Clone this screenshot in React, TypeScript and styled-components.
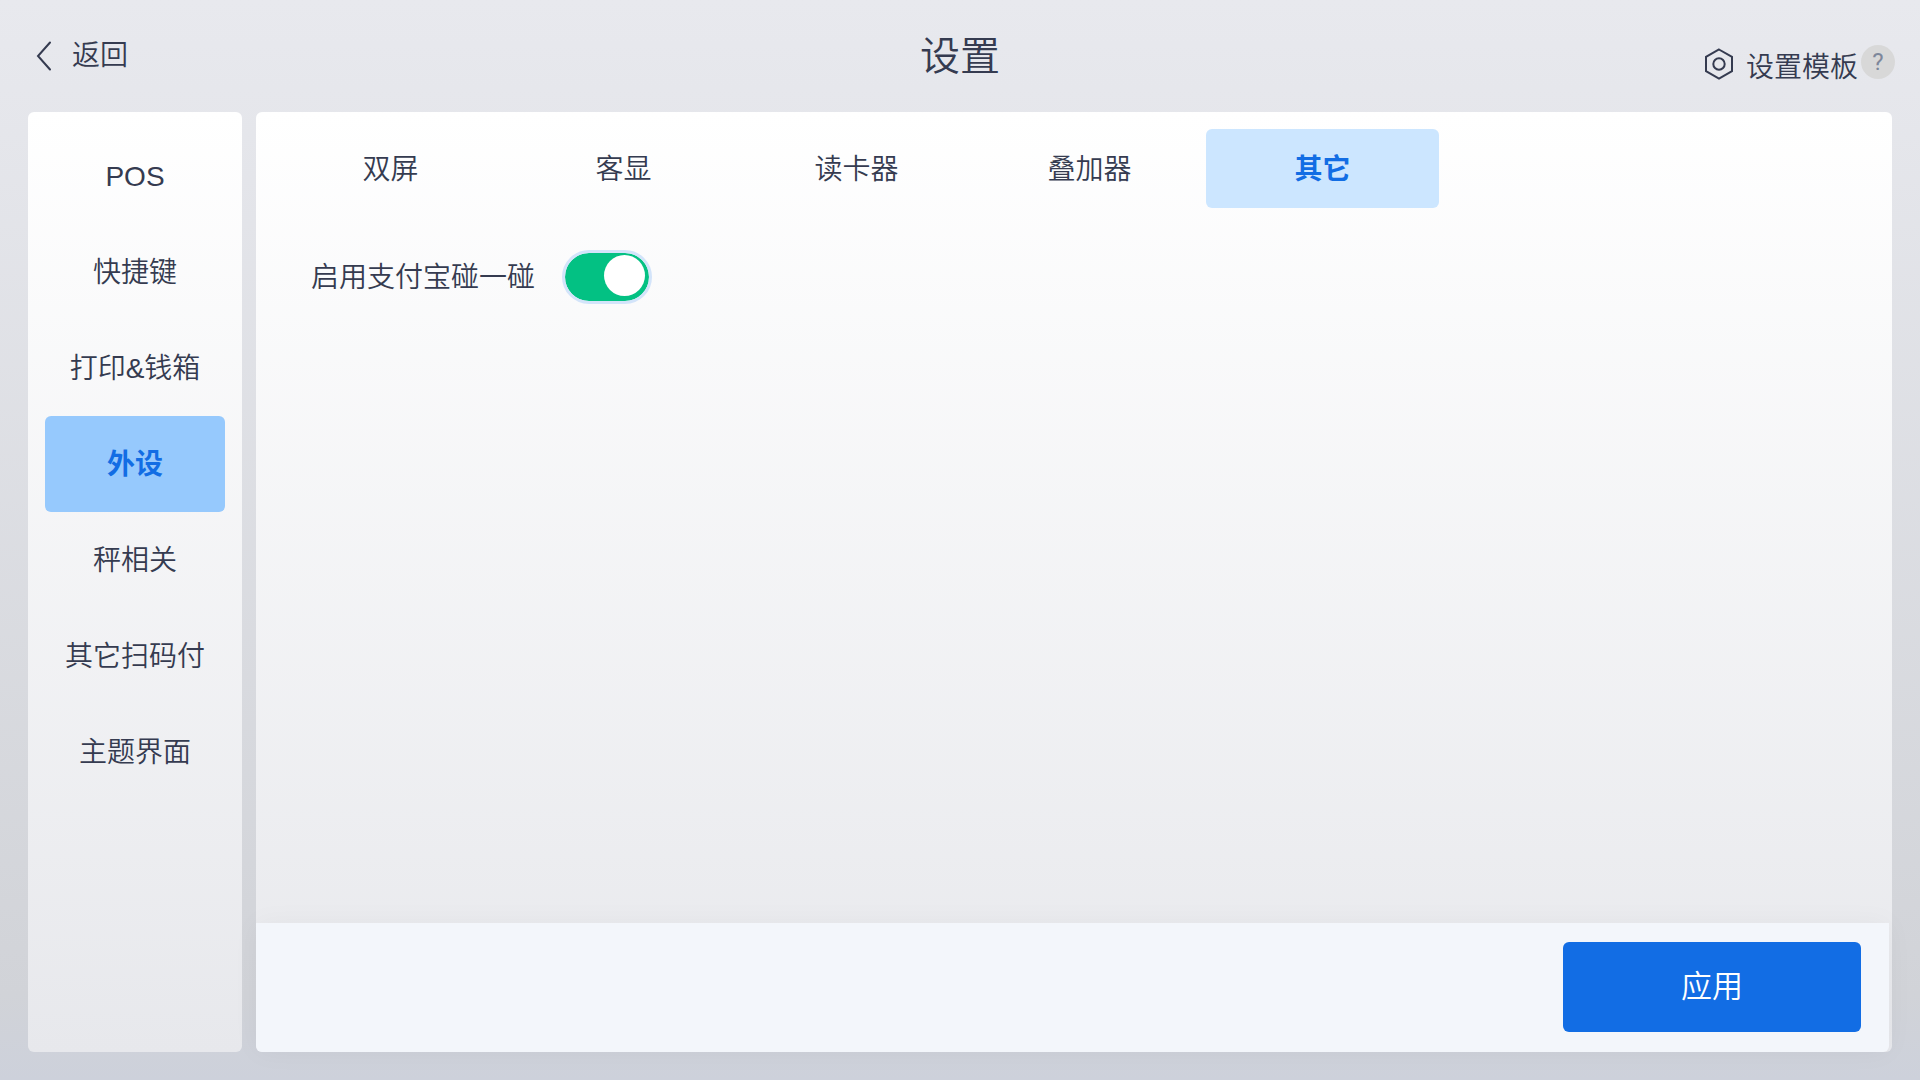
import React, { useState } from "react";
import styled, { createGlobalStyle } from "styled-components";

const GlobalStyle = createGlobalStyle`
  *, *::before, *::after { box-sizing: border-box; }
  body {
    margin: 0;
    font-family: "Liberation Sans", "Noto Sans CJK SC", sans-serif;
    font-size: 28px;
    font-weight: 350;
    line-height: 40px;
    color: #353b50;
  }
  button, input { font: inherit; color: inherit; }
`;

const Page = styled.div`
  min-height: 100vh;
  display: flex;
  flex-direction: column;
  background: linear-gradient(180deg, #e8e9ee 0%, #d1d3d8 92%, #cdd1db 100%);
`;

const Header = styled.header`
  height: 112px;
  padding: 0 25px;
  display: grid;
  grid-template-columns: 1fr auto 1fr;
  align-items: center;
`;

const PlainButton = styled.button`
  border: 0;
  padding: 0;
  background: none;
  display: flex;
  align-items: center;
  cursor: pointer;
`;

const BackButton = styled(PlainButton)`
  justify-self: start;
  padding-left: 11px;
  gap: 21px;
`;

const Title = styled.h1`
  margin: 0;
  font-size: 40px;
  font-weight: 350;
  line-height: 56px;
`;

const HeaderActions = styled.div`
  justify-self: end;
  display: flex;
  align-items: flex-start;
  gap: 3px;
  padding-top: 24px;
`;

const TemplateButton = styled(PlainButton)`
  gap: 13px;
  align-items: flex-start;
  line-height: 46px;
`;

const HelpButton = styled(PlainButton)`
  width: 34px;
  height: 34px;
  border-radius: 50%;
  justify-content: center;
  background: #d8d8d8;
  color: #7d879b;
  font-family: Roboto, sans-serif;
  font-size: 24px;
  font-weight: 400;
  line-height: 32px;
`;

const Body = styled.div`
  flex: 1;
  display: flex;
  gap: 14px;
  padding: 0 28px 28px;
`;

const Sidebar = styled.nav`
  width: 214px;
  padding: 16px 17px;
  display: flex;
  flex-direction: column;
  border-radius: 6px;
  background: linear-gradient(180deg, #ffffff, #e7e8ec);
`;

const SideItem = styled.button<{ $active: boolean }>`
  height: 96px;
  padding: 2px 0 0;
  border: 0;
  border-radius: 6px;
  cursor: pointer;
  background: ${(p) => (p.$active ? "#96c9fd" : "transparent")};
  color: ${(p) => (p.$active ? "#126de4" : "inherit")};
  font-weight: ${(p) => (p.$active ? 700 : 350)};
`;

const Panel = styled.main`
  flex: 1;
  display: flex;
  flex-direction: column;
  border-radius: 6px;
  background: linear-gradient(180deg, #ffffff, #e7e8ec);
`;

const Tabs = styled.div`
  display: flex;
  padding: 17px 18px 0;
`;

const Tab = styled.button<{ $active: boolean }>`
  width: 233px;
  height: 79px;
  padding: 2px 0 0;
  border: 0;
  border-radius: 6px;
  cursor: pointer;
  background: ${(p) => (p.$active ? "#cce6ff" : "transparent")};
  color: ${(p) => (p.$active ? "#126de4" : "inherit")};
  font-weight: ${(p) => (p.$active ? 700 : 350)};
`;

const Content = styled.section`
  flex: 1;
  padding: 42px 55px;
`;

const SettingRow = styled.label`
  display: inline-flex;
  align-items: center;
  gap: 27px;
  cursor: pointer;
`;

const SettingName = styled.span`
  padding-top: 2px;
`;

const Switch = styled.input`
  appearance: none;
  margin: 0;
  width: 90px;
  height: 54px;
  padding: 2px 4px;
  display: flex;
  border: 3px solid #d3e4fa;
  border-radius: 27px;
  background: #c4c8d0;
  background-clip: padding-box;
  cursor: pointer;

  &::before {
    content: "";
    width: 41px;
    height: 41px;
    border-radius: 50%;
    background: #fff;
  }
  &:checked {
    justify-content: flex-end;
    background-color: #03c183;
  }
`;

const Footer = styled.footer`
  height: 129px;
  margin-right: 3px;
  padding: 0 28px 2px;
  display: flex;
  align-items: center;
  justify-content: flex-end;
  border-radius: 0 0 6px 6px;
  background: #f3f6fb;
  box-shadow: 0 0 28px rgba(0, 0, 0, 0.04);
`;

const ApplyButton = styled.button`
  width: 298px;
  height: 90px;
  padding: 0;
  border: 0;
  border-radius: 6px;
  background: #126de4;
  color: #fff;
  font-size: 31px;
  cursor: pointer;
`;

const ChevronIcon = () => (
  <svg width="15" height="30" viewBox="0 0 15 30" fill="none" stroke="currentColor" strokeWidth="2" aria-hidden="true">
    <path d="M14 1.5 2 15l12 13.5" strokeLinecap="round" />
  </svg>
);

const HexIcon = () => (
  <svg width="28" height="36" viewBox="0 -3 28 36" fill="none" stroke="currentColor" strokeWidth="2" aria-hidden="true">
    <path d="M14 1.5 27 8.8v14.4L14 30.5 1 23.2V8.8z" />
    <circle cx="14" cy="16" r="5.7" />
  </svg>
);

const sections = ["POS", "快捷键", "打印&钱箱", "外设", "秤相关", "其它扫码付", "主题界面"];
const tabs = ["双屏", "客显", "读卡器", "叠加器", "其它"];

export default function App() {
  const [section, setSection] = useState("外设");
  const [tab, setTab] = useState("其它");
  const [tapPay, setTapPay] = useState(true);

  return (
    <Page>
      <GlobalStyle />
      <Header>
        <BackButton type="button">
          <ChevronIcon />
          返回
        </BackButton>
        <Title>设置</Title>
        <HeaderActions>
          <TemplateButton type="button">
            <HexIcon />
            设置模板
          </TemplateButton>
          <HelpButton type="button">?</HelpButton>
        </HeaderActions>
      </Header>
      <Body>
        <Sidebar>
          {sections.map((name) => (
            <SideItem key={name} type="button" $active={name === section} onClick={() => setSection(name)}>
              {name}
            </SideItem>
          ))}
        </Sidebar>
        <Panel>
          <Tabs role="tablist">
            {tabs.map((name) => (
              <Tab
                key={name}
                type="button"
                role="tab"
                aria-selected={name === tab}
                $active={name === tab}
                onClick={() => setTab(name)}
              >
                {name}
              </Tab>
            ))}
          </Tabs>
          <Content>
            <SettingRow htmlFor="tap-pay">
              <SettingName>启用支付宝碰一碰</SettingName>
              <Switch
                id="tap-pay"
                type="checkbox"
                role="switch"
                checked={tapPay}
                onChange={(e) => setTapPay(e.target.checked)}
              />
            </SettingRow>
          </Content>
          <Footer>
            <ApplyButton type="button">应用</ApplyButton>
          </Footer>
        </Panel>
      </Body>
    </Page>
  );
}
